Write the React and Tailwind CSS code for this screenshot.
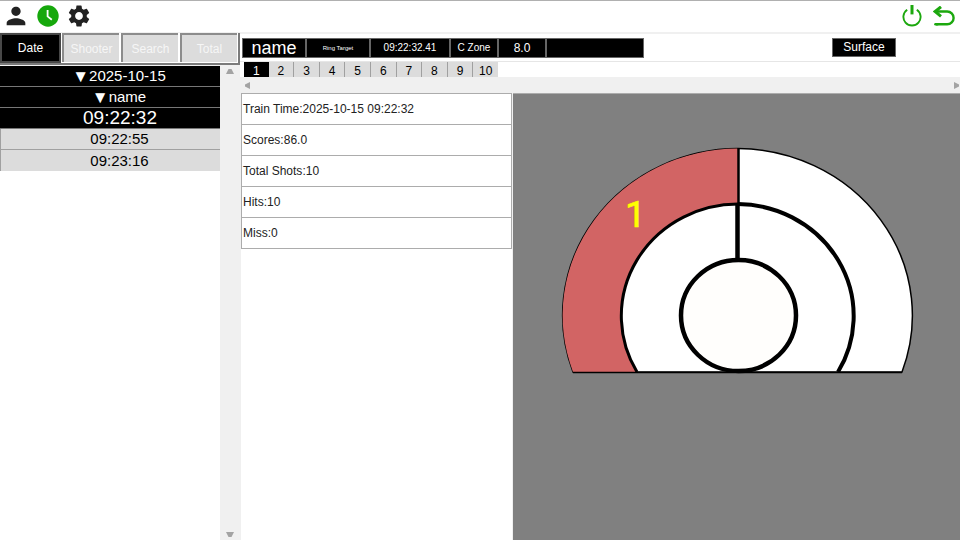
import React, { useState } from 'react';
import { MdPerson, MdSettings } from 'react-icons/md';

const FILTERS = ['Date', 'Shooter', 'Search', 'Total'];
const GROUPS = ['2025-10-15', 'name'];
const SESSIONS = ['09:22:32', '09:22:55', '09:23:16'];
const SHOTS = [1, 2, 3, 4, 5, 6, 7, 8, 9, 10];
const STATS = [
    { label: 'Train Time', value: '2025-10-15 09:22:32' },
    { label: 'Scores', value: '86.0' },
    { label: 'Total Shots', value: '10' },
    { label: 'Hits', value: '10' },
    { label: 'Miss', value: '0' },
];

function ClockIcon() {
    return (
        <svg width="22" height="22" viewBox="0 0 22 22" fill="none">
            <circle cx="11" cy="11" r="10.7" fill="#16a80c" />
            <path d="M10.6 5v6.4l4.2 3.4" stroke="#fff" strokeWidth="1.8" />
        </svg>
    );
}

function PowerIcon() {
    return (
        <svg width="20" height="22" viewBox="0 0 20 22" fill="none" stroke="#1ca80e">
            <path d="M5.2 4.8a8.6 8.6 0 1 0 9.6 0" strokeWidth="1.9" />
            <path d="M10 0v9.4" strokeWidth="3" />
        </svg>
    );
}

function BackIcon() {
    return (
        <svg width="22" height="20" viewBox="0 0 22 20" fill="none" stroke="#1ca80e" strokeWidth="2.4">
            <path d="M2 5.5h12.2a6.4 6.4 0 0 1 0 12.8H3" />
            <path d="M8 .8 2 5.5l6 4.9" strokeWidth="3" />
            <path d="M2.4 18.3h2" strokeLinecap="round" />
        </svg>
    );
}

function TopBar() {
    return (
        <header className="flex h-8 items-center justify-between border-t border-[#b0b0b0] bg-white pb-[2px] pl-[2px] pr-[5px]">
            <div className="flex items-center gap-[7px]">
                <button aria-label="Shooters" className="text-[#222]">
                    <MdPerson size={28} />
                </button>
                <button aria-label="History">
                    <ClockIcon />
                </button>
                <button aria-label="Settings" className="text-[#222]">
                    <MdSettings size={26} />
                </button>
            </div>
            <div className="flex items-center gap-[11px]">
                <button aria-label="Power">
                    <PowerIcon />
                </button>
                <button aria-label="Back">
                    <BackIcon />
                </button>
            </div>
        </header>
    );
}

function Sidebar() {
    const [filter, setFilter] = useState('Date');
    const [session, setSession] = useState(SESSIONS[0]);

    return (
        <aside className="flex w-60 shrink-0 flex-col pt-px">
            <div className="flex h-8 gap-px border-b-2 border-r-2 border-[#7b7b7b] bg-white">
                {FILTERS.map(f => (
                    <button
                        key={f}
                        onClick={() => setFilter(f)}
                        className={
                            filter === f
                                ? 'w-[61px] shrink-0 border-2 border-[#484848] bg-black text-[12px] text-white'
                                : 'mb-px mr-px flex-1 border-l-2 border-t-2 border-[#8c8c8c] bg-[#dcdcdc] text-[12px] text-[#f6f6f6]'
                        }
                    >
                        {f}
                    </button>
                ))}
            </div>
            <div className="mt-px flex min-h-0 flex-1">
                <div className="flex-1 bg-white text-center text-[15px] text-white">
                    {GROUPS.map(g => (
                        <button
                            key={g}
                            className="flex h-[21px] w-full items-center justify-center border-b border-[#777] bg-black pl-[18px] leading-[20px]"
                        >
                            <span className="text-[17px] leading-none">▼</span>
                            {g}
                        </button>
                    ))}
                    {SESSIONS.map(s => (
                        <button
                            key={s}
                            onClick={() => setSession(s)}
                            className={
                                session === s
                                    ? 'block h-[21px] w-full border-b border-[#777] bg-black pl-5 text-[19px] leading-[20px]'
                                    : 'block h-[21px] w-full border-b border-l border-[#a0a0a0] bg-[#dcdcdc] pl-[18px] leading-[20px] text-black last:border-b-0'
                            }
                        >
                            {s}
                        </button>
                    ))}
                </div>
                <div className="flex w-5 flex-col items-center justify-between bg-[#f0f0f0] py-[3px]">
                    <svg width="8" height="5" viewBox="0 0 8 5" fill="#a3a3a3"><path d="M0 5 2.5 0h3L8 5z" /></svg>
                    <svg width="8" height="5" viewBox="0 0 8 5" fill="#a3a3a3"><path d="M0 0 2.5 5h3L8 0z" /></svg>
                </div>
            </div>
        </aside>
    );
}

function ShotHeader() {
    const [shot, setShot] = useState(1);

    return (
        <div>
            <div className="flex h-[27px] items-center justify-between bg-white pl-[2px] pr-16">
                <div className="flex h-5 items-stretch divide-x-2 divide-[#666] border border-[#666] bg-black text-center leading-[18px] text-white">
                    <span className="w-16 text-[18px]">name</span>
                    <span className="w-16 text-[6px]">Ring Target</span>
                    <span className="w-20 text-[10px]">09:22:32.41</span>
                    <span className="w-12 text-[10px]">C Zone</span>
                    <span className="w-12 text-[12px]">8.0</span>
                    <span className="w-24" />
                </div>
                <button className="h-[19px] w-16 border border-[#666] bg-black text-[12px] leading-[17px] text-white">
                    Surface
                </button>
            </div>
            <div className="flex h-4 border-t border-[#e6e6e6] bg-white pl-1">
                <div className="flex w-[254px]">
                    {SHOTS.map(n => (
                        <button
                            key={n}
                            onClick={() => setShot(n)}
                            className={
                                shot === n
                                    ? 'flex-1 bg-black pt-px text-[12px] leading-4 text-white'
                                    : 'flex-1 border-r border-[#a0a0a0] bg-[#dcdcdc] pt-px text-[12px] leading-4 text-black last:border-r-0'
                            }
                        >
                            {n}
                        </button>
                    ))}
                </div>
            </div>
            <div className="flex h-4 items-center justify-between bg-[#f0f0f0] pl-[5px] pr-px">
                <svg width="5" height="7" viewBox="0 0 5 7" fill="#a3a3a3"><path d="M5 0 0 2.5v2L5 7z" /></svg>
                <svg width="5" height="7" viewBox="0 0 5 7" fill="#a3a3a3"><path d="M0 0 5 2.5v2L0 7z" /></svg>
            </div>
        </div>
    );
}

function Stats() {
    return (
        <ul className="flex w-[271px] shrink-0 flex-col bg-white text-[12px] text-[#222]">
            {STATS.map(({ label, value }) => (
                <li key={label} className="h-[31px] border border-b-0 border-[#acacac] pl-px leading-[31px] last:h-8 last:border-b">
                    {label}:{value}
                </li>
            ))}
        </ul>
    );
}

function Target() {
    return (
        <div className="min-w-0 flex-1 border-t border-[#acacac] bg-[#808080]">
            <svg className="h-full w-full" viewBox="0 0 447 446" fill="none" stroke="#000">
                <path d="M60 278A176 167 0 0 1 225 54.5A176 167 0 0 1 389 278Z" fill="#fff" strokeWidth="1.5" />
                {/* hit zone */}
                <path
                    d="M60 278A176 167 0 0 1 225 54.5V110A117 112 0 0 0 124 278Z"
                    fill="#d26464"
                    stroke="none"
                />
                <path d="M124 278A117 112 0 0 1 225 110" strokeWidth="3" />
                <path d="M225 110A117 112 0 0 1 325 278" strokeWidth="4" />
                <path d="M225.5 54v57" strokeWidth="2.5" />
                <path d="M224.5 110v57" strokeWidth="4.5" />
                <path d="M60 278.5H389" strokeWidth="1.5" />
                <ellipse cx="225.5" cy="221.5" rx="57.5" ry="55.5" fill="#fffefc" strokeWidth="4.5" />
                <text x="112" y="133" fill="#ff0" stroke="#ff0" strokeWidth="0.6" fontSize="37" className="font-[Roboto,sans-serif]">1</text>
            </svg>
        </div>
    );
}

export default function App() {
    return (
        <div className="flex h-screen flex-col bg-[#f0f0f0] font-['Liberation_Sans',Arial,sans-serif]">
            <TopBar />
            <div className="flex min-h-0 flex-1">
                <Sidebar />
                <main className="flex min-w-0 flex-1 flex-col pt-[2px]">
                    <ShotHeader />
                    <div className="flex min-h-0 flex-1 gap-px pl-px">
                        <Stats />
                        <Target />
                    </div>
                </main>
            </div>
        </div>
    );
}
